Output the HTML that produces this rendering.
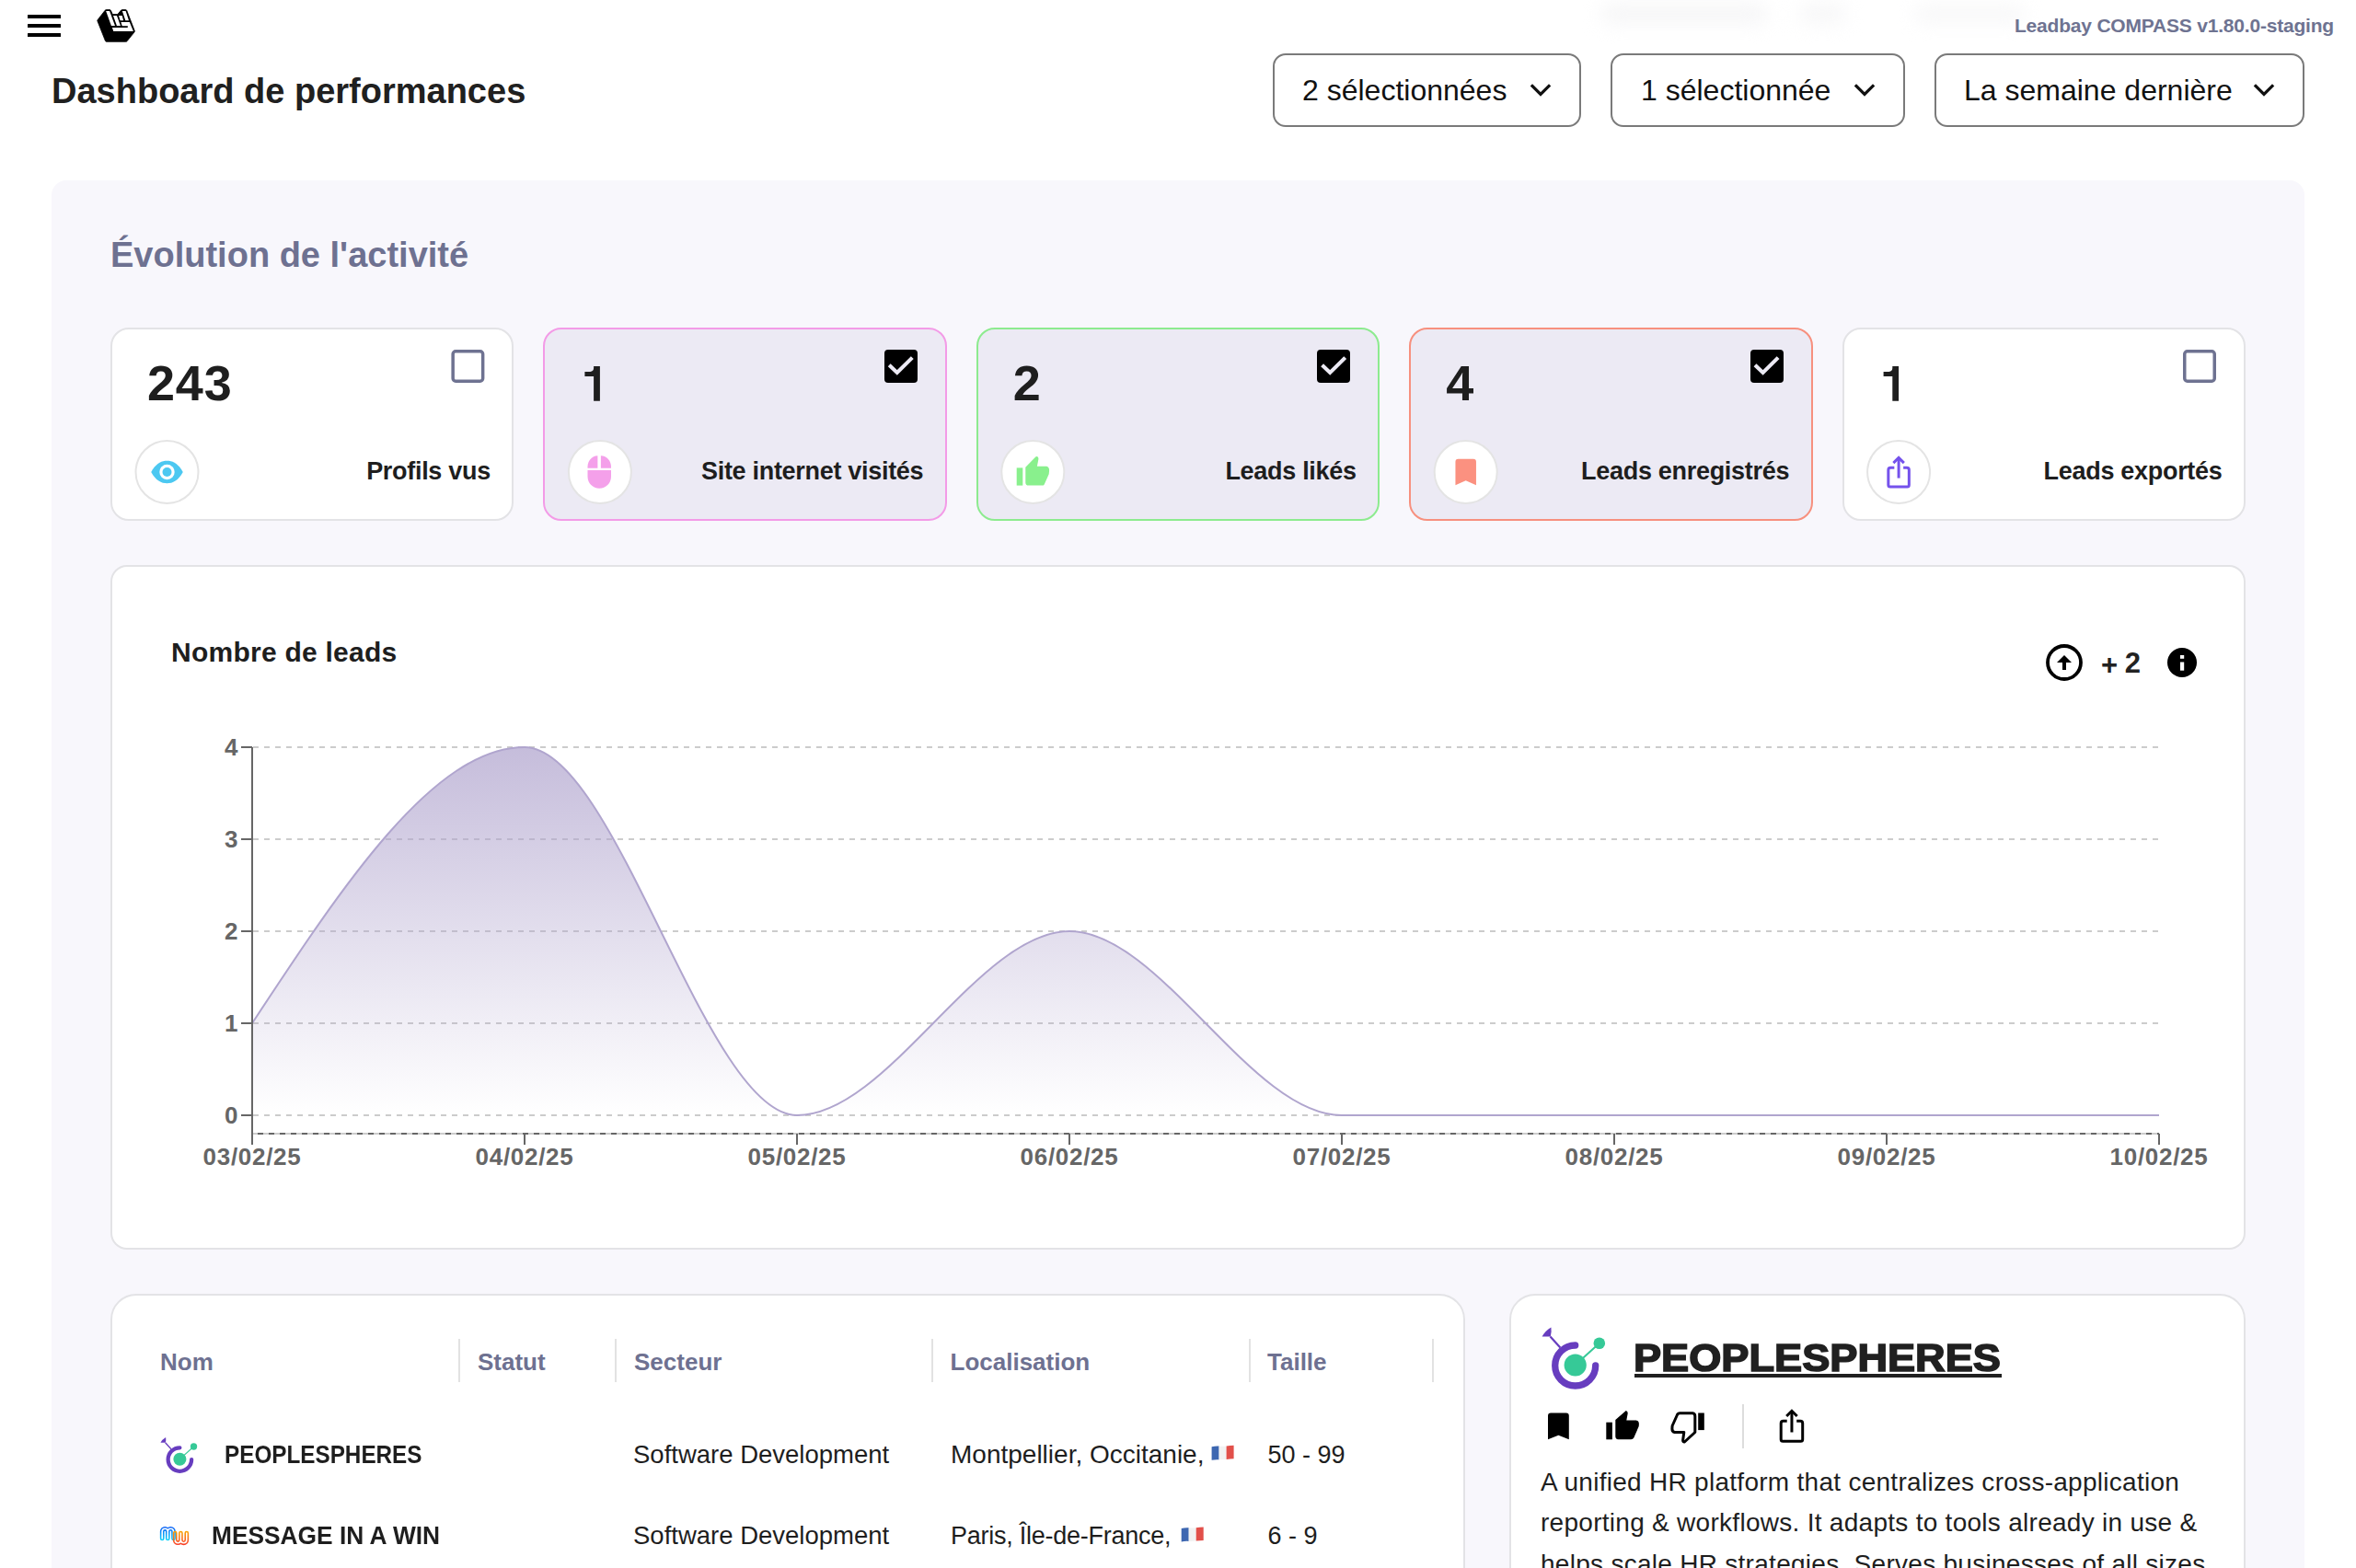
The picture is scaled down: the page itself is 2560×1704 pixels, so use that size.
<!DOCTYPE html>
<html><head><meta charset="utf-8"><title>Dashboard de performances</title>
<style>
html,body{margin:0;padding:0;background:#fff;width:2560px;height:1704px;overflow:hidden;position:relative;font-family:"Liberation Sans", sans-serif;}
.a{position:absolute;}
.t{position:absolute;white-space:nowrap;}
svg.ov{position:absolute;left:0;top:0;width:2560px;height:1704px;pointer-events:none;}
</style></head><body>

<div class="a" style="left:30px;top:16px;width:36px;height:4px;background:#000;border-radius:0.5px"></div>
<div class="a" style="left:30px;top:26px;width:36px;height:4px;background:#000;border-radius:0.5px"></div>
<div class="a" style="left:30px;top:36px;width:36px;height:4px;background:#000;border-radius:0.5px"></div>
<div class="a" style="left:1740px;top:4px;width:180px;height:22px;background:#f6f6f7;filter:blur(10px);border-radius:10px"></div>
<div class="a" style="left:1955px;top:4px;width:50px;height:22px;background:#f7f7f8;filter:blur(10px);border-radius:10px"></div>
<div class="a" style="left:2080px;top:6px;width:120px;height:18px;background:#f7f7f8;filter:blur(10px);border-radius:10px"></div>
<div class="a" style="left:1383px;top:58px;width:335px;height:80px;box-sizing:border-box;border:2px solid #7a7a7a;border-radius:14px;background:#fff"></div>
<div class="a" style="left:1750px;top:58px;width:320px;height:80px;box-sizing:border-box;border:2px solid #7a7a7a;border-radius:14px;background:#fff"></div>
<div class="a" style="left:2102px;top:58px;width:402px;height:80px;box-sizing:border-box;border:2px solid #7a7a7a;border-radius:14px;background:#fff"></div>
<div class="a" style="left:56px;top:196px;width:2448px;height:1600px;background:#F8F7FC;border-radius:16px"></div>
<div class="a" style="left:120.0px;top:356px;width:438.4px;height:210px;box-sizing:border-box;border:2px solid #E3E3E6;border-radius:20px;background:#FFFFFF"></div>
<div class="a" style="left:590.4px;top:356px;width:438.4px;height:210px;box-sizing:border-box;border:2px solid #F39BE7;border-radius:20px;background:#ECEAF4"></div>
<div class="a" style="left:960.8px;top:380px;width:36px;height:36px;background:#000;border-radius:4px"></div>
<div class="a" style="left:1060.8px;top:356px;width:438.4px;height:210px;box-sizing:border-box;border:2px solid #8DEB8F;border-radius:20px;background:#ECEAF4"></div>
<div class="a" style="left:1431.2px;top:380px;width:36px;height:36px;background:#000;border-radius:4px"></div>
<div class="a" style="left:1531.2px;top:356px;width:438.4px;height:210px;box-sizing:border-box;border:2px solid #F7907E;border-radius:20px;background:#ECEAF4"></div>
<div class="a" style="left:1901.6px;top:380px;width:36px;height:36px;background:#000;border-radius:4px"></div>
<div class="a" style="left:2001.6px;top:356px;width:438.4px;height:210px;box-sizing:border-box;border:2px solid #E3E3E6;border-radius:20px;background:#FFFFFF"></div>
<div class="a" style="left:120px;top:614px;width:2320px;height:744px;box-sizing:border-box;border:2px solid #E3E3E6;border-radius:18px;background:#fff"></div>
<div class="a" style="left:120px;top:1406px;width:1472px;height:600px;box-sizing:border-box;border:2px solid #E3E3E6;border-radius:28px;background:#fff"></div>
<div class="a" style="left:498px;top:1455px;width:2px;height:47px;background:#E2E2E2"></div>
<div class="a" style="left:667.5px;top:1455px;width:2px;height:47px;background:#E2E2E2"></div>
<div class="a" style="left:1011.5px;top:1455px;width:2px;height:47px;background:#E2E2E2"></div>
<div class="a" style="left:1356.5px;top:1455px;width:2px;height:47px;background:#E2E2E2"></div>
<div class="a" style="left:1555.5px;top:1455px;width:2px;height:47px;background:#E2E2E2"></div>
<div class="a" style="left:1640px;top:1406px;width:800px;height:600px;box-sizing:border-box;border:2px solid #E3E3E6;border-radius:28px;background:#fff"></div>
<div class="a" style="left:1776px;top:1493px;width:399px;height:4px;background:#202020"></div>
<div class="a" style="left:1893px;top:1526px;width:2px;height:48px;background:#DDDDDD"></div>
<svg class="ov" viewBox="0 0 2560 1704"><polyline points="1665,93.5 1674,102.5 1683,93.5" fill="none" stroke="#111" stroke-width="3.2" stroke-linecap="square"/>
<polyline points="2017,93.5 2026,102.5 2035,93.5" fill="none" stroke="#111" stroke-width="3.2" stroke-linecap="square"/>
<polyline points="2451,93.5 2460,102.5 2469,93.5" fill="none" stroke="#111" stroke-width="3.2" stroke-linecap="square"/>
<rect x="492.15" y="381.75" width="32.5" height="32.5" rx="3" fill="none" stroke="#6E7291" stroke-width="3.5"/>
<circle cx="181.5" cy="513" r="34" fill="#fff" stroke="#E4E4E4" stroke-width="2"/>
<g transform="translate(164.25,500.75)"><path d="M0,12.25 C5,3 11,0 17.25,0 C23.5,0 29.5,3 34.5,12.25 C29.5,21.5 23.5,24.5 17.25,24.5 C11,24.5 5,21.5 0,12.25Z" fill="#4CC8F1"/><circle cx="17.25" cy="12.25" r="8.2" fill="#fff"/><circle cx="17.25" cy="12.25" r="5" fill="#4CC8F1"/></g>
<path transform="translate(0.00,0)" d="M645.1,398.1 L651.9,398.1 L651.9,435.8 L645.1,435.8 L645.1,409.1 L635.4,409.1 L635.4,404 L641.3,404 Q645.1,403.6 645.1,400 Z" fill="#1E1E1E"/>
<polyline points="966.2,396.7 974.8,404.9 991.3,388.6" fill="none" stroke="#ECEAF4" stroke-width="4.1"/>
<circle cx="651.9" cy="513" r="34" fill="#fff" stroke="#E4E4E4" stroke-width="2"/>
<g transform="translate(638.50,495.3)" fill="#F4A0EA"><path d="M0,13.5 L0,12 C0,5.5 4.5,0.3 10.9,0 L10.9,13.5 Z"/><path d="M14.4,0 C21,0.3 25.5,5.5 25.5,12 L25.5,13.5 L14.4,13.5 Z"/><path d="M0,15.8 L25.5,15.8 L25.5,22.7 C25.5,29.8 19.8,35.5 12.75,35.5 C5.7,35.5 0,29.8 0,22.7 Z"/></g>
<polyline points="1436.6,396.7 1445.2,404.9 1461.7,388.6" fill="none" stroke="#ECEAF4" stroke-width="4.1"/>
<circle cx="1122.3" cy="513" r="34" fill="#fff" stroke="#E4E4E4" stroke-width="2"/>
<g transform="translate(1104.70,495.8)"><rect x="0" y="12.6" width="6.6" height="19.2" fill="#89F08D"/><path d="M9.6,12 L20.6,0.6 Q21.8,-0.2 23,0.8 Q24,2 23.6,3.6 L22.2,11 L32.6,11 Q35.4,11.6 35.4,15.4 L35,19.5 L30,30.6 Q29.2,31.8 27.7,31.8 L12.9,31.8 Q9.6,31.6 9.6,28.6 Z" fill="#89F08D"/></g>
<polyline points="1907.0,396.7 1915.6,404.9 1932.1,388.6" fill="none" stroke="#ECEAF4" stroke-width="4.1"/>
<circle cx="1592.6999999999998" cy="513" r="34" fill="#fff" stroke="#E4E4E4" stroke-width="2"/>
<path transform="translate(1581.4499999999998,498.8)" d="M0,3 Q0,0 3,0 L19.5,0 Q22.5,0 22.5,3 L22.5,28.5 L11.25,23.5 L0,28.5 Z" fill="#FB9180"/>
<path transform="translate(1411.20,0)" d="M645.1,398.1 L651.9,398.1 L651.9,435.8 L645.1,435.8 L645.1,409.1 L635.4,409.1 L635.4,404 L641.3,404 Q645.1,403.6 645.1,400 Z" fill="#1E1E1E"/>
<rect x="2373.75" y="381.75" width="32.5" height="32.5" rx="3" fill="none" stroke="#6E7291" stroke-width="3.5"/>
<circle cx="2063.1" cy="513" r="34" fill="#fff" stroke="#E4E4E4" stroke-width="2"/>
<g transform="translate(2050.35,495.8)" fill="none" stroke="#7552EC" stroke-width="3"><path d="M8,12.5 L4,12.5 Q1.5,12.5 1.5,15 L1.5,31.3 Q1.5,33.3 3.5,33.3 L22,33.3 Q24,33.3 24,31.3 L24,15 Q24,12.5 21.5,12.5 L17.8,12.5"/><path d="M12.75,23.8 L12.75,2"/><path d="M7,7.3 L12.75,1.6 L18.5,7.3"/></g>
<circle cx="2243" cy="720" r="18" fill="none" stroke="#000" stroke-width="3.8"/>
<path d="M2235,720 L2243,712 L2251,720 Z" fill="#000"/><rect x="2241" y="717" width="4" height="11" fill="#000"/>
<circle cx="2371" cy="720" r="16" fill="#000"/><rect x="2369" y="712" width="4.2" height="3.8" fill="#fff"/><rect x="2369" y="719.5" width="4.2" height="9.2" fill="#fff"/>
<defs><linearGradient id="gr" x1="0" y1="812" x2="0" y2="1212" gradientUnits="userSpaceOnUse"><stop offset="0" stop-color="#AFA3CD" stop-opacity="0.72"/><stop offset="1" stop-color="#AFA3CD" stop-opacity="0"/></linearGradient></defs>
<line x1="275" y1="1212" x2="2346" y2="1212" stroke="#CCCCCC" stroke-width="2" stroke-dasharray="6 6"/>
<line x1="275" y1="1112" x2="2346" y2="1112" stroke="#CCCCCC" stroke-width="2" stroke-dasharray="6 6"/>
<line x1="275" y1="1012" x2="2346" y2="1012" stroke="#CCCCCC" stroke-width="2" stroke-dasharray="6 6"/>
<line x1="275" y1="912" x2="2346" y2="912" stroke="#CCCCCC" stroke-width="2" stroke-dasharray="6 6"/>
<line x1="275" y1="812" x2="2346" y2="812" stroke="#CCCCCC" stroke-width="2" stroke-dasharray="6 6"/>
<path d="M274,1112 C372.67,962.00 471.33,812.00 570,812 C668.67,812.00 767.33,1212.00 866,1212 C964.67,1212.00 1063.33,1012.00 1162,1012 C1260.67,1012.00 1359.33,1212.00 1458,1212 C1556.67,1212.00 1655.33,1212.00 1754,1212 C1852.67,1212.00 1951.33,1212.00 2050,1212 C2148.67,1212.00 2247.33,1212.00 2346,1212 L2346,1212 L274,1212 Z" fill="url(#gr)"/>
<path d="M274,1112 C372.67,962.00 471.33,812.00 570,812 C668.67,812.00 767.33,1212.00 866,1212 C964.67,1212.00 1063.33,1012.00 1162,1012 C1260.67,1012.00 1359.33,1212.00 1458,1212 C1556.67,1212.00 1655.33,1212.00 1754,1212 C1852.67,1212.00 1951.33,1212.00 2050,1212 C2148.67,1212.00 2247.33,1212.00 2346,1212" fill="none" stroke="#B0A5CE" stroke-width="2"/>
<line x1="274" y1="1232" x2="2346" y2="1232" stroke="#CCCCCC" stroke-width="2"/>
<line x1="274" y1="1232" x2="2346" y2="1232" stroke="#666666" stroke-width="2" stroke-dasharray="6 6" stroke-dashoffset="6"/>
<line x1="274" y1="812" x2="274" y2="1244" stroke="#666666" stroke-width="2"/>
<line x1="262" y1="1212" x2="274" y2="1212" stroke="#666666" stroke-width="2"/>
<line x1="262" y1="1112" x2="274" y2="1112" stroke="#666666" stroke-width="2"/>
<line x1="262" y1="1012" x2="274" y2="1012" stroke="#666666" stroke-width="2"/>
<line x1="262" y1="912" x2="274" y2="912" stroke="#666666" stroke-width="2"/>
<line x1="262" y1="812" x2="274" y2="812" stroke="#666666" stroke-width="2"/>
<line x1="570" y1="1232" x2="570" y2="1244" stroke="#666666" stroke-width="2"/>
<line x1="866" y1="1232" x2="866" y2="1244" stroke="#666666" stroke-width="2"/>
<line x1="1162" y1="1232" x2="1162" y2="1244" stroke="#666666" stroke-width="2"/>
<line x1="1458" y1="1232" x2="1458" y2="1244" stroke="#666666" stroke-width="2"/>
<line x1="1754" y1="1232" x2="1754" y2="1244" stroke="#666666" stroke-width="2"/>
<line x1="2050" y1="1232" x2="2050" y2="1244" stroke="#666666" stroke-width="2"/>
<line x1="2346" y1="1232" x2="2346" y2="1244" stroke="#666666" stroke-width="2"/>
<g transform="translate(1316.6,1570.8)"><path d="M0,1.5 Q4,0.5 8,0.8 L8,15.5 Q4,15.2 0,16 Z" fill="#3D67B1"/><path d="M8,0.8 Q12,1.2 16,0.8 L16,15.2 Q12,15.7 8,15.5 Z" fill="#F2F2F2"/><path d="M16,0.8 Q20,0.2 24,0 L24,14.5 Q20,14.8 16,15.2 Z" fill="#E2504A"/></g>
<g transform="translate(1283.7,1659.4)"><path d="M0,1.5 Q4,0.5 8,0.8 L8,15.5 Q4,15.2 0,16 Z" fill="#3D67B1"/><path d="M8,0.8 Q12,1.2 16,0.8 L16,15.2 Q12,15.7 8,15.5 Z" fill="#F2F2F2"/><path d="M16,0.8 Q20,0.2 24,0 L24,14.5 Q20,14.8 16,15.2 Z" fill="#E2504A"/></g>
<g transform="matrix(0.58,0,0,0.58,-797.4,725.3)"><path d="M1711.7,1462 A22,22 0 1 0 1733.7,1484" fill="none" stroke="#673DBF" stroke-width="7.3" stroke-linecap="round"/><line x1="1684.5" y1="1452.5" x2="1695.4" y2="1464.6" stroke="#673DBF" stroke-width="2.2"/><path d="M1685.4,1442.4 Q1679,1446 1675.6,1452.6 L1684.8,1452.6 Q1686.2,1447 1685.4,1442.4 Z" fill="#673DBF"/><line x1="1716" y1="1479.5" x2="1737.8" y2="1459.8" stroke="#36C997" stroke-width="2"/><circle cx="1711.7" cy="1483.5" r="12.1" fill="#36C997"/><circle cx="1737.8" cy="1459.8" r="6.3" fill="#36C997"/></g>
<defs><linearGradient id="gm" x1="0" y1="1659" x2="0" y2="1674.5" gradientUnits="userSpaceOnUse"><stop offset="0" stop-color="#0B5CF5"/><stop offset="1" stop-color="#10D9F9"/></linearGradient><linearGradient id="gw" x1="0" y1="1663.5" x2="0" y2="1679" gradientUnits="userSpaceOnUse"><stop offset="0" stop-color="#F9A800"/><stop offset="1" stop-color="#F83C2A"/></linearGradient><mask id="mm" maskUnits="userSpaceOnUse" x="160" y="1650" width="60" height="40"><path d="M176.2,1672 L176.2,1664.35 A3.05,3.05 0 0 1 182.3,1664.35 L182.3,1672 M182.3,1664.35 A3.1,3.1 0 0 1 188.5,1664.35 L188.5,1672" fill="none" stroke="#fff" stroke-width="4.7" stroke-linecap="round" stroke-linejoin="round"/><path d="M176.2,1672 L176.2,1664.35 A3.05,3.05 0 0 1 182.3,1664.35 L182.3,1672 M182.3,1664.35 A3.1,3.1 0 0 1 188.5,1664.35 L188.5,1672" fill="none" stroke="#000" stroke-width="1.6" stroke-linecap="round" stroke-linejoin="round"/></mask><mask id="mw" maskUnits="userSpaceOnUse" x="160" y="1650" width="60" height="40"><path d="M190.2,1666 L190.2,1673.6 A3.1,3.1 0 0 0 196.4,1673.6 L196.4,1666 M196.4,1673.6 A3.2,3.2 0 0 0 202.8,1673.6 L202.8,1666" fill="none" stroke="#fff" stroke-width="4.7" stroke-linecap="round" stroke-linejoin="round"/><path d="M190.2,1666 L190.2,1673.6 A3.1,3.1 0 0 0 196.4,1673.6 L196.4,1666 M196.4,1673.6 A3.2,3.2 0 0 0 202.8,1673.6 L202.8,1666" fill="none" stroke="#000" stroke-width="1.6" stroke-linecap="round" stroke-linejoin="round"/></mask></defs><rect x="170" y="1655" width="25" height="22" fill="url(#gm)" mask="url(#mm)"/><rect x="185" y="1660" width="23" height="22" fill="url(#gw)" mask="url(#mw)"/>
<g><path d="M1711.7,1462 A22,22 0 1 0 1733.7,1484" fill="none" stroke="#673DBF" stroke-width="7.3" stroke-linecap="round"/><line x1="1684.5" y1="1452.5" x2="1695.4" y2="1464.6" stroke="#673DBF" stroke-width="2.2"/><path d="M1685.4,1442.4 Q1679,1446 1675.6,1452.6 L1684.8,1452.6 Q1686.2,1447 1685.4,1442.4 Z" fill="#673DBF"/><line x1="1716" y1="1479.5" x2="1737.8" y2="1459.8" stroke="#36C997" stroke-width="2"/><circle cx="1711.7" cy="1483.5" r="12.1" fill="#36C997"/><circle cx="1737.8" cy="1459.8" r="6.3" fill="#36C997"/></g>
<path d="M1682,1538.5 Q1682,1535.5 1685,1535.5 L1701.8,1535.5 Q1704.8,1535.5 1704.8,1538.5 L1704.8,1564.3 L1693.4,1559.8 L1682,1564.3 Z" fill="#000"/>
<g transform="translate(1745.3,1533.1)"><rect x="0" y="12.6" width="6.6" height="18.6" fill="#000"/><path d="M10,10 L21.5,0 Q23.6,0.6 23.4,3 L22,10.3 L32.5,10.3 Q35.6,10.8 35.6,14.5 L35.4,17 L30,29.5 Q29,31.2 27,31.2 L13,31.2 Q10,31 10,28 Z" fill="#000"/></g>
<g transform="translate(1816.2,1535.5)"><rect x="29" y="0" width="6.6" height="18.6" fill="#000"/><path d="M25.6,21 L14.2,31.5 Q12.5,31.8 12.4,29.8 L13.6,21 L3.5,21 Q0.6,20.5 0.7,17 L0.9,14 L6.5,1.5 Q7.4,0.3 9,0.3 L23,0.3 Q25.6,0.6 25.6,3.5 Z" fill="none" stroke="#000" stroke-width="3" stroke-linejoin="round"/></g>
<g transform="translate(1933.7,1531.7)" fill="none" stroke="#000" stroke-width="3"><path d="M8,12.5 L4,12.5 Q1.5,12.5 1.5,15 L1.5,32.5 Q1.5,34.5 3.5,34.5 L23,34.5 Q25,34.5 25,32.5 L25,15 Q25,12.5 22.5,12.5 L18.5,12.5"/><path d="M13.25,24.8 L13.25,2"/><path d="M7.5,7.3 L13.25,1.6 L19,7.3"/></g>
<path d="M106,21.7 L114.2,11.2 Q114.6,10.6 115.4,10.6 L119.2,10.6 Q120.1,10.6 120.5,11.5 L122.3,15.6 L127.8,15.6 L131.6,11 Q132.1,10.6 132.8,10.6 L136.4,10.6 Q137.4,10.6 137.8,11.5 L146.3,33.6 Q146.5,34.3 146.1,34.8 L138,44.8 Q137.5,45.3 136.8,45.3 L115.6,45.3 Q114.8,45.3 114.5,44.6 L105.8,22.6 Q105.6,22.1 106,21.7 Z" fill="#000" stroke="#000" stroke-width="0.8" stroke-linejoin="round"/><path d="M115.15,12.03 L119.08,12.03 L124.97,28.03 L120.9,28.03 Z" fill="#fff"/><path d="M123.0,16.94 L126.94,16.94 L131.0,28.03 L126.94,28.03 Z" fill="#fff"/><path d="M129.04,17.08 L132.69,17.08 L134.09,22.13 L130.58,22.13 Z" fill="#fff"/><path d="M132.83,12.03 L136.62,12.03 L139.98,22.13 L136.34,22.13 Z" fill="#fff"/><path d="M131.4,23.96 L140.8,23.96 L144.9,34.06 L123.3,34.06 L121.9,29.9 L138.2,29.9 Q139.1,29.9 139.1,29.1 Q139.1,28.2 138.2,28.2 L132.7,28.2 Z" fill="#fff"/></svg>
<div class="t" style="top:17.22px;font-size:21px;line-height:21px;font-weight:bold;color:#6E7391;letter-spacing:-0.2px;right:24.00px;">Leadbay COMPASS v1.80.0-staging</div>
<div class="t" style="top:80.23px;font-size:38px;line-height:38px;font-weight:bold;color:#202020;left:56.00px;">Dashboard de performances</div>
<div class="t" style="top:82.31px;font-size:32px;line-height:32px;font-weight:normal;color:#111;left:1415.00px;">2 sélectionnées</div>
<div class="t" style="top:82.31px;font-size:32px;line-height:32px;font-weight:normal;color:#111;left:1783.00px;">1 sélectionnée</div>
<div class="t" style="top:82.31px;font-size:32px;line-height:32px;font-weight:normal;color:#111;left:2134.00px;">La semaine dernière</div>
<div class="t" style="top:258.13px;font-size:38px;line-height:38px;font-weight:bold;color:#6E7191;left:120.00px;">Évolution de l'activité</div>
<div class="t" style="top:389.09px;font-size:54px;line-height:54px;font-weight:bold;color:#1E1E1E;letter-spacing:0.8px;left:160.00px;">243</div>
<div class="t" style="top:498.94px;font-size:27px;line-height:27px;font-weight:bold;color:#1E1E1E;letter-spacing:-0.3px;right:2027.10px;">Profils vus</div>
<div class="t" style="top:498.94px;font-size:27px;line-height:27px;font-weight:bold;color:#1E1E1E;letter-spacing:-0.3px;right:1556.70px;">Site internet visités</div>
<div class="t" style="top:389.09px;font-size:54px;line-height:54px;font-weight:bold;color:#1E1E1E;letter-spacing:0.8px;left:1100.80px;">2</div>
<div class="t" style="top:498.94px;font-size:27px;line-height:27px;font-weight:bold;color:#1E1E1E;letter-spacing:-0.3px;right:1086.30px;">Leads likés</div>
<div class="t" style="top:389.09px;font-size:54px;line-height:54px;font-weight:bold;color:#1E1E1E;letter-spacing:0.8px;left:1571.20px;">4</div>
<div class="t" style="top:498.94px;font-size:27px;line-height:27px;font-weight:bold;color:#1E1E1E;letter-spacing:-0.3px;right:615.90px;">Leads enregistrés</div>
<div class="t" style="top:498.94px;font-size:27px;line-height:27px;font-weight:bold;color:#1E1E1E;letter-spacing:-0.3px;right:145.50px;">Leads exportés</div>
<div class="t" style="top:693.50px;font-size:30px;line-height:30px;font-weight:bold;color:#1E1E1E;letter-spacing:0.25px;left:186.00px;">Nombre de leads</div>
<div class="t" style="top:706.56px;font-size:31px;line-height:31px;font-weight:bold;color:#222;left:2283.00px;">+</div>
<div class="t" style="top:704.66px;font-size:31px;line-height:31px;font-weight:bold;color:#222;left:2308.80px;">2</div>
<div class="t" style="top:1198.99px;font-size:26px;line-height:26px;font-weight:bold;color:#666666;right:2301.50px;">0</div>
<div class="t" style="top:1098.99px;font-size:26px;line-height:26px;font-weight:bold;color:#666666;right:2301.50px;">1</div>
<div class="t" style="top:998.99px;font-size:26px;line-height:26px;font-weight:bold;color:#666666;right:2301.50px;">2</div>
<div class="t" style="top:898.99px;font-size:26px;line-height:26px;font-weight:bold;color:#666666;right:2301.50px;">3</div>
<div class="t" style="top:798.99px;font-size:26px;line-height:26px;font-weight:bold;color:#666666;right:2301.50px;">4</div>
<div class="t" style="top:1243.89px;font-size:26px;line-height:26px;font-weight:bold;color:#666666;letter-spacing:0.7px;left:-226.00px;width:1000px;text-align:center;">03/02/25</div>
<div class="t" style="top:1243.89px;font-size:26px;line-height:26px;font-weight:bold;color:#666666;letter-spacing:0.7px;left:70.00px;width:1000px;text-align:center;">04/02/25</div>
<div class="t" style="top:1243.89px;font-size:26px;line-height:26px;font-weight:bold;color:#666666;letter-spacing:0.7px;left:366.00px;width:1000px;text-align:center;">05/02/25</div>
<div class="t" style="top:1243.89px;font-size:26px;line-height:26px;font-weight:bold;color:#666666;letter-spacing:0.7px;left:662.00px;width:1000px;text-align:center;">06/02/25</div>
<div class="t" style="top:1243.89px;font-size:26px;line-height:26px;font-weight:bold;color:#666666;letter-spacing:0.7px;left:958.00px;width:1000px;text-align:center;">07/02/25</div>
<div class="t" style="top:1243.89px;font-size:26px;line-height:26px;font-weight:bold;color:#666666;letter-spacing:0.7px;left:1254.00px;width:1000px;text-align:center;">08/02/25</div>
<div class="t" style="top:1243.89px;font-size:26px;line-height:26px;font-weight:bold;color:#666666;letter-spacing:0.7px;left:1550.00px;width:1000px;text-align:center;">09/02/25</div>
<div class="t" style="top:1243.89px;font-size:26px;line-height:26px;font-weight:bold;color:#666666;letter-spacing:0.7px;left:1846.00px;width:1000px;text-align:center;">10/02/25</div>
<div class="t" style="top:1466.89px;font-size:26px;line-height:26px;font-weight:bold;color:#6E7191;left:174.00px;">Nom</div>
<div class="t" style="top:1466.89px;font-size:26px;line-height:26px;font-weight:bold;color:#6E7191;left:519.00px;">Statut</div>
<div class="t" style="top:1466.89px;font-size:26px;line-height:26px;font-weight:bold;color:#6E7191;left:689.00px;">Secteur</div>
<div class="t" style="top:1466.89px;font-size:26px;line-height:26px;font-weight:bold;color:#6E7191;left:1032.50px;">Localisation</div>
<div class="t" style="top:1466.89px;font-size:26px;line-height:26px;font-weight:bold;color:#6E7191;left:1377.00px;">Taille</div>
<div class="t" style="top:1566.90px;font-size:28px;line-height:28px;font-weight:bold;color:#1E1E1E;left:244.00px;transform-origin:0 0;transform:scaleX(0.867);">PEOPLESPHERES</div>
<div class="t" style="top:1654.90px;font-size:28px;line-height:28px;font-weight:bold;color:#1E1E1E;left:229.50px;transform-origin:0 0;transform:scaleX(0.94);">MESSAGE IN A WIN</div>
<div class="t" style="top:1567.32px;font-size:27.5px;line-height:27.5px;font-weight:normal;color:#1E1E1E;left:688.00px;">Software Development</div>
<div class="t" style="top:1655.32px;font-size:27.5px;line-height:27.5px;font-weight:normal;color:#1E1E1E;left:688.00px;">Software Development</div>
<div class="t" style="top:1566.90px;font-size:28px;line-height:28px;font-weight:normal;color:#1E1E1E;left:1033.00px;">Montpellier, Occitanie,</div>
<div class="t" style="top:1655.74px;font-size:27px;line-height:27px;font-weight:normal;color:#1E1E1E;letter-spacing:-0.25px;left:1033.00px;">Paris, Île-de-France,</div>
<div class="t" style="top:1567.74px;font-size:27px;line-height:27px;font-weight:normal;color:#1E1E1E;left:1377.50px;">50 - 99</div>
<div class="t" style="top:1655.74px;font-size:27px;line-height:27px;font-weight:normal;color:#1E1E1E;left:1377.50px;">6 - 9</div>
<div class="t" style="top:1455.15px;font-size:42px;line-height:42px;font-weight:900;color:#202020;left:1774.80px;transform-origin:0 0;transform:scaleX(1.075);-webkit-text-stroke:1.6px #202020;">PEOPLESPHERES</div>
<div class="t" style="top:1597.20px;font-size:28px;line-height:28px;font-weight:normal;color:#1E1E1E;letter-spacing:0.28px;left:1674.00px;">A unified HR platform that centralizes cross-application</div>
<div class="t" style="top:1641.40px;font-size:28px;line-height:28px;font-weight:normal;color:#1E1E1E;letter-spacing:0.28px;left:1674.00px;">reporting &amp; workflows. It adapts to tools already in use &amp;</div>
<div class="t" style="top:1685.60px;font-size:28px;line-height:28px;font-weight:normal;color:#1E1E1E;letter-spacing:0.28px;left:1674.00px;">helps scale HR strategies. Serves businesses of all sizes.</div>
</body></html>
